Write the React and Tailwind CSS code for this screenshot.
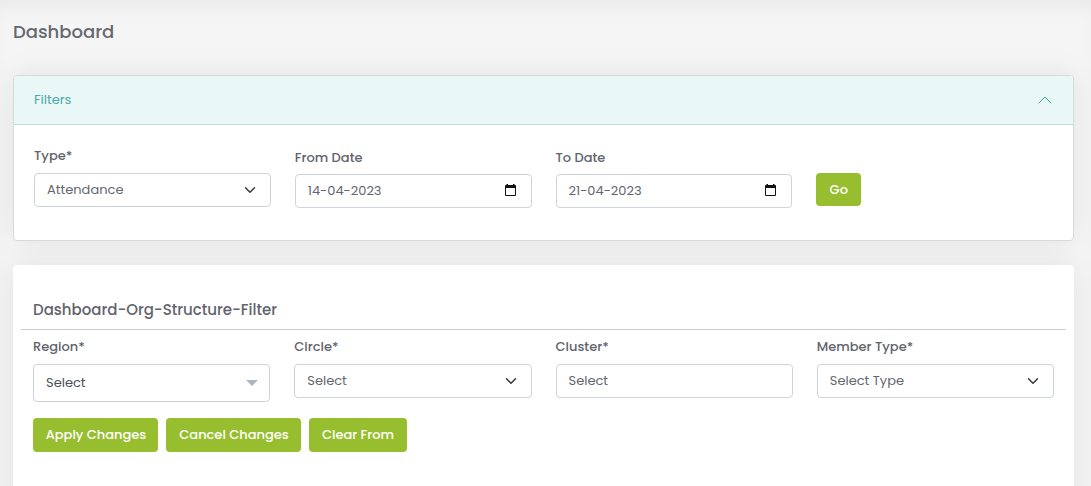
import React from "react";

function Chevron() {
  return (
    <svg width="16" height="12" viewBox="0 0 16 16" fill="none" className="shrink-0">
      <path d="M2 5l6 6 6-6" stroke="#343a40" strokeWidth="2" strokeLinecap="round" strokeLinejoin="round" />
    </svg>
  );
}

function Calendar() {
  return (
    <svg width="11" height="12" viewBox="0 0 11 12" className="relative -top-px mr-[3px] shrink-0">
      <path d="M1.5 0h1.5v1h5V0h1.500v1h.5q1 0 1 1v9q0 1-1 1H1q-1 0-1-1V2q0-1 1-1h.5zM1 4v7h9V4z" fill="#111" fillRule="evenodd" />
    </svg>
  );
}

function Field({ label, className = "w-[236.75px]", labelClass = "h-[27px]", boxClass = "h-[34px]", children }) {
  return (
    <div className={"shrink-0 " + className}>
      <div className={"text-[13px] font-medium leading-[19px] text-[#62636d] " + labelClass}>{label}</div>
      <div className={"flex items-center justify-between rounded-[4px] border border-[#ced4da] bg-white px-3 text-[13px] text-[#64666f] " + boxClass}>
        {children}
      </div>
    </div>
  );
}

function Button({ className, children }) {
  return (
    <button className={"flex items-center justify-center rounded-[4px] bg-[#97be2f] text-[13px] font-medium text-white " + className}>
      {children}
    </button>
  );
}

export default function App() {
  return (
    <div className="h-[486px] w-[1091px] overflow-hidden whitespace-nowrap bg-[#f5f5f5] font-['Poppins','Inter',sans-serif] shadow-[inset_0_14px_18px_-8px_#e9e9e9]">
      <div className="flex w-[1074px] flex-col pl-[13px]">
        <h1 className="mt-[18px] h-[28px] text-[18px] font-medium leading-[28px] text-[#66676f]">Dashboard</h1>
        <section className="mt-[29px] h-[166px] rounded-[4px] border border-[#d5dadb] bg-white shadow-[0_0_30px_rgba(0,0,0,0.08)]">
          <div className="flex h-[49px] items-center justify-between rounded-t-[3px] border-b border-[#c5d9da] bg-[#eaf7f7] px-5 text-[13px] text-[#4aa9aa]">
            <span>Filters</span>
            <svg width="16" height="16" viewBox="0 0 16 16" fill="none">
              <path d="M2 11l6-6 6 6" stroke="#3aa8a9" strokeWidth="1" strokeLinecap="round" strokeLinejoin="round" />
            </svg>
          </div>
          <div className="flex gap-6 px-5 pt-[21px]">
            <Field label="Type*">
              <span>Attendance</span>
              <Chevron />
            </Field>
            <Field label="From Date" labelClass="h-[28px] pt-[2px]">
              <span>14-04-2023</span>
              <Calendar />
            </Field>
            <Field label="To Date" labelClass="h-[28px] pt-[2px]">
              <span>21-04-2023</span>
              <Calendar />
            </Field>
            <Button className="mt-[27px] h-[33px] w-[45px]">Go</Button>
          </div>
        </section>
        <section className="mt-6 h-[260px] rounded-[4px] bg-white px-2 pt-[33px] shadow-[0_0_30px_rgba(0,0,0,0.08)]">
          <h2 className="h-[32px] border-b border-[#c9cccf] pl-3 text-[15px] font-medium leading-[24px] text-[#62636d]">
            Dashboard-Org-Structure-Filter
          </h2>
          <div className="flex gap-6 pl-3 pt-[7px]">
            <Field label="Region*" className="w-[237.25px]" boxClass="h-[38px]">
              <span className="text-[#495057]">Select</span>
              <svg width="12" height="6" viewBox="0 0 12 6" className="-mr-px">
                <path d="M0 0h12L6 6z" fill="#adb5bd" />
              </svg>
            </Field>
            <Field label="Circle*" className="w-[237.25px]">
              <span>Select</span>
              <Chevron />
            </Field>
            <Field label="Cluster*" className="w-[237.25px]">
              <span>Select</span>
            </Field>
            <Field label="Member Type*" className="w-[237.25px]">
              <span>Select Type</span>
              <Chevron />
            </Field>
          </div>
          <div className="mt-4 flex gap-2 pl-3">
            <Button className="h-[34px] w-[125px] pl-px">Apply Changes</Button>
            <Button className="h-[34px] w-[135px] pl-px">Cancel Changes</Button>
            <Button className="h-[34px] w-[98px]">Clear From</Button>
          </div>
        </section>
      </div>
    </div>
  );
}
